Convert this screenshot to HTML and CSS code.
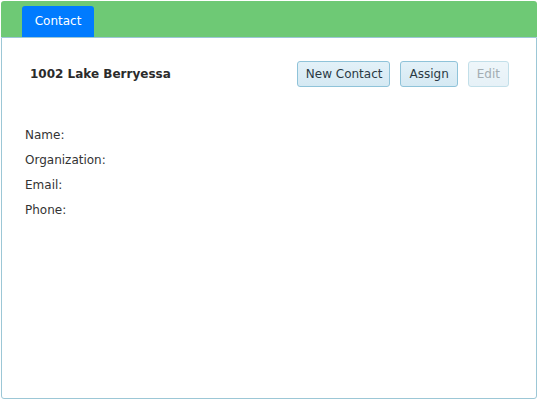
FILE: index.html
```html
<!DOCTYPE html>
<html>
<head>
<meta charset="utf-8">
<link rel="stylesheet" href="styles.css">
</head>
<body>
<div class="widget">
  <div class="tabbar">
    <div class="tab">Contact</div>
  </div>
  <div class="panel">
    <div class="head">
      <div class="title">1002 Lake Berryessa</div>
      <div class="actions">
        <button class="btn">New Contact</button>
        <button class="btn">Assign</button>
        <button class="btn" disabled>Edit</button>
      </div>
    </div>
    <div class="fields">
      <div class="field">Name:</div>
      <div class="field">Organization:</div>
      <div class="field">Email:</div>
      <div class="field">Phone:</div>
    </div>
  </div>
</div>
</body>
</html>
```
FILE: styles.css
```css
html, body {
  margin: 0;
  padding: 0;
  background: #ffffff;
}
body {
  font-family: "DejaVu Sans", Verdana, sans-serif;
  font-size: 12px;
  color: #333333;
}
.widget {
  width: 536px;
  height: 398px;
  margin: 1px;
  display: flex;
  flex-direction: column;
}
.tabbar {
  background: #6ec975;
  border-radius: 3px 3px 0 0;
  height: 36px;
  padding-left: 21px;
  display: flex;
  align-items: flex-end;
  box-sizing: border-box;
}
.tab {
  background: #007bff;
  color: #ffffff;
  height: 31px;
  width: 72px;
  box-sizing: border-box;
  border-radius: 3px 3px 0 0;
  display: flex;
  align-items: center;
  justify-content: center;
  padding-bottom: 1px;
}
.panel {
  flex: 1;
  border: 1px solid #9cc7d6;
  border-radius: 0 0 3px 3px;
  background: #ffffff;
}
.head {
  display: flex;
  align-items: center;
  justify-content: space-between;
  padding: 23px 27px 0 28px;
}
.title {
  font-weight: bold;
  color: #2b2b2b;
}
.actions {
  display: flex;
  gap: 10px;
}
.btn {
  font-family: inherit;
  font-size: 12px;
  color: #2b3a44;
  height: 26px;
  padding: 0 8px;
  background: linear-gradient(#e3f1f8, #d5e9f3);
  border: 1px solid #8fc3d9;
  border-radius: 3px;
}
.btn:first-child {
  padding: 0 7px 0 8px;
}
.btn:disabled {
  color: #a3adb3;
  background: linear-gradient(#eef6fa, #e6f1f7);
  border-color: #c2dfe9;
}
.fields {
  padding: 36px 0 0 23px;
}
.field {
  height: 25px;
  line-height: 25px;
}
```
